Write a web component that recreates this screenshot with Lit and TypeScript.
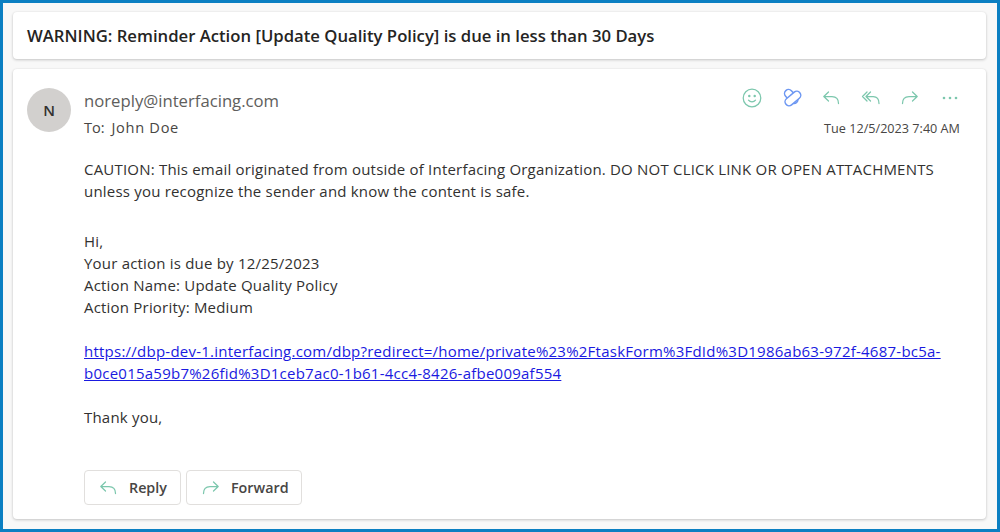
import { LitElement, html, css, svg } from "lit";
import { customElement } from "lit/decorators.js";

const replyP = svg`<path d="M7.500 4 2.800 8.500 7.500 13M3 8.500h8c4 0 6.500 2.600 6.500 7" />`;
const forwardP = svg`<path d="M12.500 4 17.200 8.500 12.500 13M17 8.500H9c-4 0-6.500 2.600-6.500 7" />`;

@customElement("app-root")
export class AppRoot extends LitElement {
  static styles = css`
    :host {
      display: block;
      width: 1000px;
      height: 532px;
      box-sizing: border-box;
      border: 3px solid #0b7fc2;
      background: #f8f8f8;
      padding: 9px 11px 10px 10px;
      font-family: "Open Sans", "Noto Sans", sans-serif;
      color: #323130;
      overflow: hidden;
    }
    .card {
      background: #fff;
      border-radius: 4px;
      box-shadow: 0 1px 3px rgba(0, 0, 0, 0.2), 0 0 2px rgba(0, 0, 0, 0.06);
    }
    .subject {
      height: 47px;
      box-sizing: border-box;
      padding: 0 14px;
      display: flex;
      align-items: center;
      font-size: 16.7px;
      font-weight: 600;
      color: #252423;
      margin-bottom: 10px;
    }
    .message {
      height: 450px;
      box-sizing: border-box;
      padding: 19px 26px 0 14px;
      display: flex;
      gap: 13px;
    }
    .avatar {
      width: 44px;
      height: 44px;
      flex: none;
      border-radius: 50%;
      background: #d2d0ce;
      display: flex;
      align-items: center;
      justify-content: center;
      font-size: 15px;
      font-weight: 600;
      color: #323130;
    }
    .main { flex: 1; min-width: 0; }
    .head { display: flex; justify-content: space-between; height: 70px; }
    .from { font-size: 16.7px; line-height: 26px; color: #605e5c; }
    .to { font-size: 14.6px; line-height: 22px; margin-top: 2px; color: #484644; white-space: pre; }
    .name { margin-left: 3px; letter-spacing: 0.7px; }
    .right { display: flex; flex-direction: column; align-items: flex-end; }
    .icons { display: flex; gap: 19.6px; height: 20px; margin-bottom: 12px; }
    .icons svg { width: 20px; height: 20px; display: block; }
    .stroke { fill: none; stroke: #7cc7ad; stroke-width: 1.25; stroke-linecap: round; stroke-linejoin: round; }
    .time { font-size: 12.65px; line-height: 16px; color: #484644; }
    .body { font-size: 15px; letter-spacing: 0.2px; line-height: 22px; color: #323130; }
    .body p { margin: 0 0 22px; }
    .body p:first-child { margin-bottom: 28px; }
    a { color: #1a1ae0; text-decoration: underline; letter-spacing: 0.24px; }
    .actions { display: flex; gap: 5px; margin-top: 42px; }
    .btn {
      height: 35px;
      box-sizing: border-box;
      border: 1px solid #e1dfdd;
      border-radius: 4px;
      display: flex;
      align-items: center;
      padding: 0 13px;
      gap: 11px;
      font-size: 14.3px;
      font-weight: 600;
      color: #484644;
      background: #fff;
    }
    .btn svg { width: 20px; height: 20px; }
    .btn.r { width: 97px; }
    .btn.f { width: 116px; padding: 0 0 0 14px; gap: 10px; }
  `;

  render() {
    return html`
      <div class="card subject">WARNING: Reminder Action [Update Quality Policy] is due in less than 30 Days</div>
      <div class="card message">
        <div class="avatar">N</div>
        <div class="main">
          <div class="head">
            <div>
              <div class="from">noreply@interfacing.com</div>
              <div class="to">To: <span class="name">John Doe</span></div>
            </div>
            <div class="right">
              <div class="icons">
                <svg viewBox="0 0 20 20" class="stroke">
                  <circle cx="10" cy="10" r="8.800" />
                  <circle cx="7.300" cy="8" r="0.600" fill="#7cc7ad" />
                  <circle cx="12.700" cy="8" r="0.600" fill="#7cc7ad" />
                  <path d="M6.500 12.200c1.800 2.300 5.200 2.300 7 0" />
                </svg>
                <svg viewBox="0 0 20 20" fill="none" stroke-linecap="round">
                  <path d="M6.500 5.500 12 11.500" stroke="#6d97f2" stroke-width="9.400" />
                  <path d="M6.500 5.500 12 11.500" stroke="#fff" stroke-width="6.400" />
                  <path d="M7 13.800 14.800 7.200" stroke="#6d97f2" stroke-width="9.400" />
                  <path d="M7 13.800 14.800 7.200" stroke="#fff" stroke-width="6.400" />
                </svg>
                <svg viewBox="0 0 20 20" class="stroke">${replyP}</svg>
                <svg viewBox="0 0 20 20" class="stroke">
                  <path d="M9.500 4 5 8.500 9.500 13M5.200 8.500h7c3.600 0 5.800 2.600 5.800 7M6 4 1.500 8.500 6 13" />
                </svg>
                <svg viewBox="0 0 20 20" class="stroke">${forwardP}</svg>
                <svg viewBox="0 0 20 20" fill="#7cc7ad">
                  <circle cx="4" cy="10" r="1.300" /><circle cx="10" cy="10" r="1.300" /><circle cx="16" cy="10" r="1.300" />
                </svg>
              </div>
              <div class="time">Tue 12/5/2023 7:40 AM</div>
            </div>
          </div>
          <div class="body">
            <p>CAUTION: This email originated from outside of Interfacing Organization. DO NOT CLICK LINK OR OPEN ATTACHMENTS<br />unless you recognize the sender and know the content is safe.</p>
            <p>Hi,<br />Your action is due by 12/25/2023<br />Action Name: Update Quality Policy<br />Action Priority: Medium</p>
            <p><a href="#">https://dbp-dev-1.interfacing.com/dbp?redirect=/home/private%23%2FtaskForm%3FdId%3D1986ab63-972f-4687-bc5a-<br />b0ce015a59b7%26fid%3D1ceb7ac0-1b61-4cc4-8426-afbe009af554</a></p>
            <p>Thank you,</p>
          </div>
          <div class="actions">
            <div class="btn r"><svg viewBox="0 0 20 20" class="stroke">${replyP}</svg>Reply</div>
            <div class="btn f"><svg viewBox="0 0 20 20" class="stroke">${forwardP}</svg>Forward</div>
          </div>
        </div>
      </div>
    `;
  }
}
